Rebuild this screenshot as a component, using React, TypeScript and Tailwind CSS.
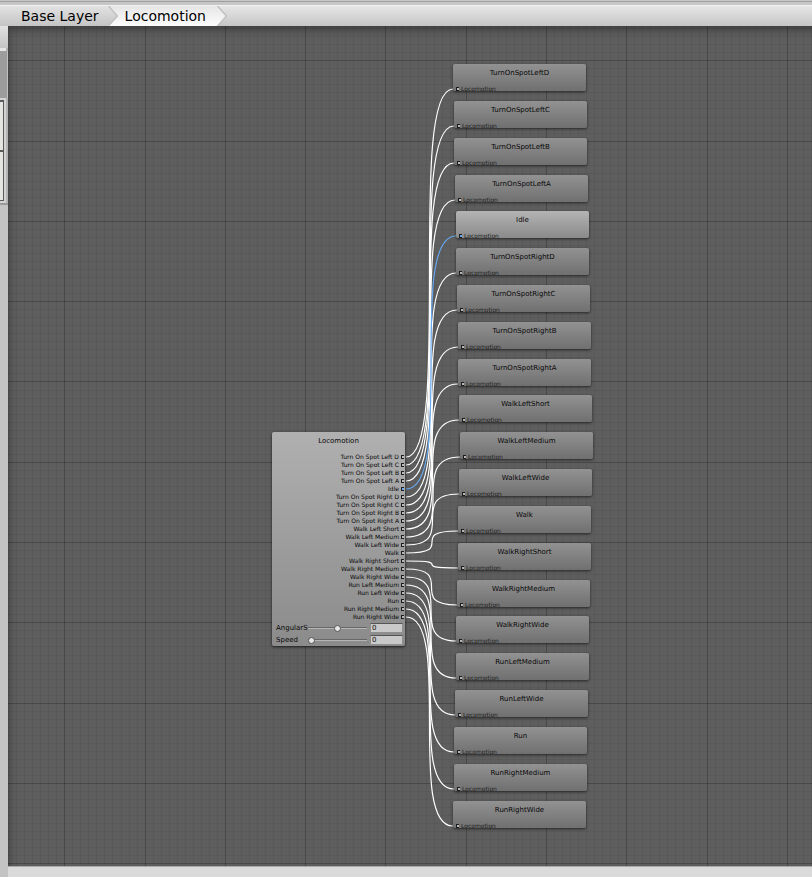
import React from 'react';

type Motion = {
  name: string;
  label: string;
  x: number;
  y: number;
  active?: boolean;
};

// Positions are in canvas coordinates
const motions: Motion[] = [
  { name: 'TurnOnSpotLeftD', label: 'Turn On Spot Left D', x: 445, y: 38 },
  { name: 'TurnOnSpotLeftC', label: 'Turn On Spot Left C', x: 446, y: 75 },
  { name: 'TurnOnSpotLeftB', label: 'Turn On Spot Left B', x: 446, y: 112 },
  { name: 'TurnOnSpotLeftA', label: 'Turn On Spot Left A', x: 447, y: 149 },
  { name: 'Idle', label: 'Idle', x: 448, y: 185, active: true },
  { name: 'TurnOnSpotRightD', label: 'Turn On Spot Right D', x: 448, y: 222 },
  { name: 'TurnOnSpotRightC', label: 'Turn On Spot Right C', x: 449, y: 259 },
  { name: 'TurnOnSpotRightB', label: 'Turn On Spot Right B', x: 450, y: 296 },
  { name: 'TurnOnSpotRightA', label: 'Turn On Spot Right A', x: 450, y: 333 },
  { name: 'WalkLeftShort', label: 'Walk Left Short', x: 451, y: 369 },
  { name: 'WalkLeftMedium', label: 'Walk Left Medium', x: 452, y: 406 },
  { name: 'WalkLeftWide', label: 'Walk Left Wide', x: 451, y: 443 },
  { name: 'Walk', label: 'Walk', x: 450, y: 480 },
  { name: 'WalkRightShort', label: 'Walk Right Short', x: 450, y: 517 },
  { name: 'WalkRightMedium', label: 'Walk Right Medium', x: 449, y: 554 },
  { name: 'WalkRightWide', label: 'Walk Right Wide', x: 448, y: 590 },
  { name: 'RunLeftMedium', label: 'Run Left Medium', x: 448, y: 627 },
  { name: 'RunLeftWide', label: 'Run Left Wide', x: 447, y: 664 },
  { name: 'Run', label: 'Run', x: 446, y: 701 },
  { name: 'RunRightMedium', label: 'Run Right Medium', x: 446, y: 738 },
  { name: 'RunRightWide', label: 'Run Right Wide', x: 445, y: 775 },
];

const parameters = [
  { id: 'angular', label: 'AngularS', value: 0, min: -1, max: 1 },
  { id: 'speed', label: 'Speed', value: 0, min: 0, max: 1 },
];

const TREE_X = 264;
const TREE_Y = 406;
const GRID_STEP = 8.03;

const gridLines = (origin: number, count: number) =>
  Array.from({ length: count }, (_, i) => ({
    pos: Math.round(origin + i * GRID_STEP) + 0.5,
    major: i % 10 === 0,
  }));

const columns = gridLines(-24, 400);
const rows = gridLines(-46, 300);

const Grid: React.FC = () => (
  <svg className="absolute inset-0 h-full w-full" aria-hidden="true">
    {columns.map(({ pos, major }) => (
      <line key={pos} x1={pos} x2={pos} y1="0" y2="100%" stroke="#000" strokeOpacity={major ? 0.22 : 0.05} />
    ))}
    {rows.map(({ pos, major }) => (
      <line key={pos} x1="0" x2="100%" y1={pos} y2={pos} stroke="#000" strokeOpacity={major ? 0.22 : 0.05} />
    ))}
  </svg>
);

// The active link goes last so that it stays on top of the bundle
const links = motions
  .map((m, i) => ({ ...m, fromY: TREE_Y + 25 + i * 8 }))
  .sort((a, b) => Number(a.active ?? false) - Number(b.active ?? false));

const Links: React.FC = () => (
  <svg className="pointer-events-none absolute inset-0 h-full w-full" fill="none" aria-hidden="true">
    {links.map((m) => {
      const x1 = TREE_X + 134;
      const x2 = m.x;
      const y2 = m.y + 25;
      return (
        <path
          key={m.name}
          d={`M${x1} ${m.fromY}C${x2} ${m.fromY} ${x1} ${y2} ${x2} ${y2}`}
          stroke={m.active ? '#68a8f0' : '#fff'}
          strokeWidth="1.2"
        />
      );
    })}
  </svg>
);

const Port: React.FC<{ active?: boolean }> = ({ active }) => (
  <svg width="3" height="4" viewBox="0 0 3 4" className="shrink-0" aria-hidden="true">
    <rect width="3" height="4" fill="#1c1c1c" />
    <rect x="1" y="1" width="2" height="2" fill={active ? '#68a8f0' : '#b8b8b8'} />
  </svg>
);

const MotionNode: React.FC<{ motion: Motion }> = ({ motion }) => (
  <div
    className={`absolute flex h-[27px] w-[133px] flex-col justify-between rounded-xs bg-linear-to-b shadow-[0_1px_3px_rgba(0,0,0,0.6)] ${
      motion.active ? 'from-[#b4b4b4] to-[#8a8a8a]' : 'from-[#929292] to-[#707070]'
    }`}
    style={{ left: motion.x, top: motion.y }}
  >
    <h3 className="pt-[5px] text-center text-[7px] leading-[9px] text-[#080808]">{motion.name}</h3>
    <div className="flex h-[4px] items-center gap-0.5 pl-[3px] text-[6px] leading-[4px] text-[#1c1c1c]">
      <Port active={motion.active} />
      <span>Locomotion</span>
    </div>
  </div>
);

const BlendTreeNode: React.FC = () => (
  <section
    className="absolute w-[133px] rounded-xs bg-linear-to-b from-[#b0b0b0] to-[#8b8b8b] pb-px shadow-[0_1px_3px_rgba(0,0,0,0.7)]"
    style={{ left: TREE_X, top: TREE_Y }}
  >
    <h2 className="pt-[5px] pb-[7px] text-center text-[7px] leading-[9px] text-[#080808]">Locomotion</h2>
    <ul>
      {motions.map((m) => (
        <li key={m.name} className="flex h-2 items-center justify-end gap-0.5 pr-px text-[6px] leading-[8px] text-[#080808]">
          <span>{m.label}</span>
          <Port active={m.active} />
        </li>
      ))}
    </ul>
    <div className="flex flex-col gap-px pt-px">
      {parameters.map((p) => (
        <div key={p.id} className="flex h-[11px] items-center pr-[2px] pl-1">
          <label htmlFor={p.id} className="w-[32px] text-[7px] leading-[10px] text-[#080808]">
            {p.label}
          </label>
          <input
            id={p.id}
            type="range"
            min={p.min}
            max={p.max}
            step="0.01"
            defaultValue={p.value}
            className="h-2 w-[59px] appearance-none bg-transparent [&::-webkit-slider-runnable-track]:h-[2px] [&::-webkit-slider-runnable-track]:border-t [&::-webkit-slider-runnable-track]:border-[#666] [&::-webkit-slider-runnable-track]:bg-[#b5b5b5] [&::-webkit-slider-thumb]:-mt-[3px] [&::-webkit-slider-thumb]:size-[7px] [&::-webkit-slider-thumb]:appearance-none [&::-webkit-slider-thumb]:rounded-full [&::-webkit-slider-thumb]:border [&::-webkit-slider-thumb]:border-[#555] [&::-webkit-slider-thumb]:bg-[#e6e6e6]"
          />
          <input
            type="text"
            aria-label={`${p.label} value`}
            defaultValue={p.value}
            className="ml-[3px] h-[10px] w-[33px] border border-[#8f8f8f] border-t-[#555] bg-[#c9c9c9] px-px text-[7px] leading-[8px] text-[#111]"
          />
        </div>
      ))}
    </div>
  </section>
);

const Chevron: React.FC<{ from: string; to: string; id: string }> = ({ from, to, id }) => (
  <svg width="11" height="20" viewBox="0 0 11 20" className="relative z-10 -mr-[11px] shrink-0" aria-hidden="true">
    <defs>
      <linearGradient id={id} x1="0" y1="0" x2="0" y2="1">
        <stop offset="0" stopColor={from} />
        <stop offset="1" stopColor={to} />
      </linearGradient>
    </defs>
    <path d="M0 0L9.500 10L0 20Z" fill={`url(#${id})`} />
    <path d="M0.500 0L9.500 10L0.500 20" fill="none" stroke="#bcbcbc" strokeWidth="1.2" />
  </svg>
);

const Breadcrumbs: React.FC = () => (
  <nav
    aria-label="Layers"
    className="flex h-[21px] shrink-0 items-stretch border-t border-[#f2f2f2] bg-linear-to-b from-[#e6e6e6] to-[#c6c6c6] text-[14px] leading-[20px] text-black"
  >
    <a href="#base" className="bg-linear-to-b from-[#e2e2e2] to-[#c4c4c4] pr-[9px] pl-[21px]">
      Base Layer
    </a>
    <Chevron id="crumb-base" from="#e2e2e2" to="#c4c4c4" />
    <a href="#locomotion" aria-current="page" className="bg-linear-to-b from-[#e6e6e6] to-[#fcfcfc] pr-[11px] pl-[17px]">
      Locomotion
    </a>
    <Chevron id="crumb-locomotion" from="#e6e6e6" to="#fcfcfc" />
  </nav>
);

const SidePanel: React.FC = () => (
  <aside className="w-2 shrink-0 bg-[#c3c3c3]">
    <div className="h-[22px] bg-linear-to-b from-[#e2e2e2] to-[#c4c4c4]" />
    <div className="h-[3px] border-r-2 border-[#b0b0b0] bg-[#e4e4e4]" />
    <div className="h-[47px] border-r border-[#c0c0c0] bg-[#9c9c9c]" />
    <div className="border-r-2 border-[#b4b4b4] bg-[#d2d2d2] pt-[2px] pr-[2px] pb-[2px]">
      <div className="h-[50px] border-t-2 border-r border-[#5a5a5a] bg-[#e4e4e1]" />
      <div className="h-[51px] border-t-2 border-r border-b border-[#5a5a5a] bg-[#e4e4e1]" />
    </div>
    <div className="h-[2px] bg-[#9a9a9a]" />
  </aside>
);

export default function App() {
  return (
    <div className="flex h-screen flex-col overflow-hidden bg-[#c3c3c3] font-['DejaVu_Sans',sans-serif]">
      <div className="h-[5px] shrink-0 bg-[#c6c6c6] pt-px">
        <div className="h-px bg-[#a0a0a0]" />
      </div>
      <Breadcrumbs />
      <div className="flex min-h-0 flex-1">
        <SidePanel />
        <div className="flex min-w-0 flex-1 flex-col">
          <main className="relative flex-1 overflow-hidden bg-[#5e5e5e]">
            <Grid />
            <div className="pointer-events-none absolute inset-0 shadow-[inset_5px_8px_8px_-4px_rgba(0,0,0,0.35)]" />
            <Links />
            <BlendTreeNode />
            {motions.map((m) => (
              <MotionNode key={m.name} motion={m} />
            ))}
          </main>
          <footer className="h-[11px] shrink-0 border-t border-[#a8a8a8] bg-[#dadada]" />
        </div>
      </div>
    </div>
  );
}
